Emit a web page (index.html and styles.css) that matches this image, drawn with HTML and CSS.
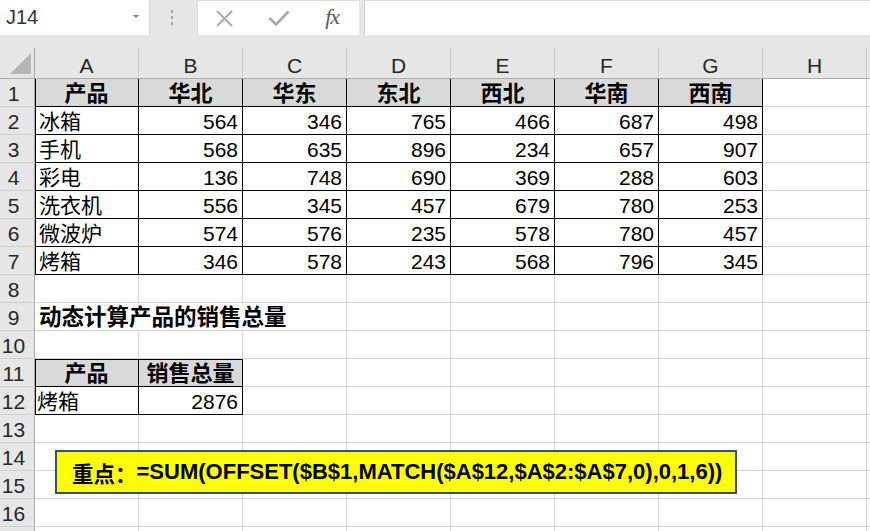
FILE: index.html
```html
<!DOCTYPE html>
<html lang="zh-CN">
<head>
<meta charset="utf-8">
<title>Excel</title>
<link rel="stylesheet" href="styles.css">
</head>
<body>
<div class="app">
  <div class="fbar">
    <div class="namebox"><span class="nb-text">J14</span><span class="caret"></span></div>
    <div class="grip"><i></i><i></i><i></i></div>
    <div class="btns">
      <div class="slot"><svg width="17" height="17" viewBox="0 0 17 17"><path d="M1 1 L16 16 M16 1 L1 16" stroke="#a9a9a9" stroke-width="1.8" fill="none"/></svg></div>
      <div class="slot"><svg width="22" height="16" viewBox="0 0 22 16"><path d="M1.5 8 L8 14.5 L20.5 1.5" stroke="#a9a9a9" stroke-width="2.6" fill="none"/></svg></div>
      <div class="slot fx">fx</div>
    </div>
    <div class="input"></div>
  </div>

  <div class="sheet">
    <div class="corner"><svg width="22" height="22" viewBox="0 0 22 22"><polygon points="21,0 21,21 0,21" fill="#b5b5b5"/></svg></div>
    <div class="ch">A</div><div class="ch">B</div><div class="ch">C</div><div class="ch">D</div><div class="ch">E</div><div class="ch">F</div><div class="ch">G</div><div class="ch">H</div><div class="ch s"></div>

    <div class="rh">1</div>
    <div class="c t tl hd">产品</div><div class="c t hd">华北</div><div class="c t hd">华东</div><div class="c t hd">东北</div><div class="c t hd">西北</div><div class="c t hd">华南</div><div class="c t hd">西南</div><div class="c"></div><div class="c s"></div>

    <div class="rh">2</div>
    <div class="c t tl">冰箱</div><div class="c t n">564</div><div class="c t n">346</div><div class="c t n">765</div><div class="c t n">466</div><div class="c t n">687</div><div class="c t n">498</div><div class="c"></div><div class="c s"></div>

    <div class="rh">3</div>
    <div class="c t tl">手机</div><div class="c t n">568</div><div class="c t n">635</div><div class="c t n">896</div><div class="c t n">234</div><div class="c t n">657</div><div class="c t n">907</div><div class="c"></div><div class="c s"></div>

    <div class="rh">4</div>
    <div class="c t tl">彩电</div><div class="c t n">136</div><div class="c t n">748</div><div class="c t n">690</div><div class="c t n">369</div><div class="c t n">288</div><div class="c t n">603</div><div class="c"></div><div class="c s"></div>

    <div class="rh">5</div>
    <div class="c t tl">洗衣机</div><div class="c t n">556</div><div class="c t n">345</div><div class="c t n">457</div><div class="c t n">679</div><div class="c t n">780</div><div class="c t n">253</div><div class="c"></div><div class="c s"></div>

    <div class="rh">6</div>
    <div class="c t tl">微波炉</div><div class="c t n">574</div><div class="c t n">576</div><div class="c t n">235</div><div class="c t n">578</div><div class="c t n">780</div><div class="c t n">457</div><div class="c"></div><div class="c s"></div>

    <div class="rh">7</div>
    <div class="c t tl">烤箱</div><div class="c t n">346</div><div class="c t n">578</div><div class="c t n">243</div><div class="c t n">568</div><div class="c t n">796</div><div class="c t n">345</div><div class="c"></div><div class="c s"></div>

    <div class="rh">8</div>
    <div class="c"></div><div class="c"></div><div class="c"></div><div class="c"></div><div class="c"></div><div class="c"></div><div class="c"></div><div class="c"></div><div class="c s"></div>

    <div class="rh">9</div>
    <div class="c title span3">动态计算产品的销售总量</div><div class="c"></div><div class="c"></div><div class="c"></div><div class="c"></div><div class="c"></div><div class="c s"></div>

    <div class="rh">10</div>
    <div class="c"></div><div class="c"></div><div class="c"></div><div class="c"></div><div class="c"></div><div class="c"></div><div class="c"></div><div class="c"></div><div class="c s"></div>

    <div class="rh">11</div>
    <div class="c t tl tt hd">产品</div><div class="c t tt hd">销售总量</div><div class="c"></div><div class="c"></div><div class="c"></div><div class="c"></div><div class="c"></div><div class="c"></div><div class="c s"></div>

    <div class="rh">12</div>
    <div class="c t tl first">烤箱</div><div class="c t n">2876</div><div class="c"></div><div class="c"></div><div class="c"></div><div class="c"></div><div class="c"></div><div class="c"></div><div class="c s"></div>

    <div class="rh">13</div>
    <div class="c"></div><div class="c"></div><div class="c"></div><div class="c"></div><div class="c"></div><div class="c"></div><div class="c"></div><div class="c"></div><div class="c s"></div>

    <div class="rh">14</div>
    <div class="c"></div><div class="c"></div><div class="c"></div><div class="c"></div><div class="c"></div><div class="c"></div><div class="c"></div><div class="c"></div><div class="c s"></div>

    <div class="rh">15</div>
    <div class="c"></div><div class="c"></div><div class="c"></div><div class="c"></div><div class="c"></div><div class="c"></div><div class="c"></div><div class="c"></div><div class="c s"></div>

    <div class="rh">16</div>
    <div class="c"></div><div class="c"></div><div class="c"></div><div class="c"></div><div class="c"></div><div class="c"></div><div class="c"></div><div class="c"></div><div class="c s"></div>

    <div class="rh"></div>
    <div class="c"></div><div class="c"></div><div class="c"></div><div class="c"></div><div class="c"></div><div class="c"></div><div class="c"></div><div class="c"></div><div class="c s"></div>
  </div>

  <div class="note"><span class="note-cn">重点：</span><span class="note-f">=SUM(OFFSET($B$1,MATCH($A$12,$A$2:$A$7,0),0,1,6))</span></div>
</div>
</body>
</html>
```

FILE: styles.css
```css
* { box-sizing: border-box; }
body {
  margin: 0;
  font-family: "Liberation Sans", "Noto Sans CJK SC", sans-serif;
  background: #fff;
}
.app {
  width: 870px;
  height: 531px;
  overflow: hidden;
  position: relative;
  background: #fff;
}

/* formula bar */
.fbar {
  height: 48px;
  background: #e6e6e6;
  display: flex;
  align-items: flex-start;
}
.namebox {
  width: 150px;
  height: 35px;
  background: #fff;
  display: flex;
  align-items: center;
  justify-content: space-between;
  padding: 0 10px 0 6px;
  border-right: 1px solid #d6d6d6;
  color: #333;
  font-size: 20px;
}
.nb-text { line-height: 35px; }
.caret {
  width: 0;
  height: 0;
  border-left: 3px solid transparent;
  border-right: 3px solid transparent;
  border-top: 3px solid #7a7a7a;
  margin-top: -2px;
}
.grip {
  width: 47px;
  height: 35px;
  display: flex;
  flex-direction: column;
  align-items: center;
  justify-content: center;
  gap: 3px;
  padding-right: 3px;
}
.grip i {
  display: block;
  width: 2px;
  height: 3px;
  background: #a3a3a3;
}
.btns {
  width: 162px;
  height: 35px;
  background: #fff;
  display: flex;
  border-top: 1px solid #dcdcdc;
  border-left: 1px solid #dcdcdc;
}
.slot {
  width: 54px;
  height: 34px;
  display: flex;
  align-items: center;
  justify-content: center;
}
.fx {
  font-family: "Liberation Serif", serif;
  font-style: italic;
  font-size: 22px;
  color: #595959;
  letter-spacing: -1px;
  padding-bottom: 2px;
}
.input {
  flex: 1;
  height: 35px;
  margin-left: 5px;
  background: #fff;
  border-top: 1px solid #dcdcdc;
  border-left: 1px solid #d0d0d0;
}

/* sheet */
.sheet {
  display: grid;
  grid-template-columns: 35px repeat(8, 104px) 3px;
  grid-template-rows: 31px;
  grid-auto-rows: 28px;
}
.corner {
  background: #e6e6e6;
  border-right: 1px solid #ababab;
  border-bottom: 1px solid #ababab;
  display: flex;
  align-items: flex-end;
  justify-content: flex-end;
  padding: 0 2px 3px 0;
}
.ch {
  background: #e6e6e6;
  border-right: 1px solid #c6c6c6;
  border-bottom: 1px solid #ababab;
  text-align: center;
  font-size: 21px;
  color: #262626;
  padding-top: 5px;
  line-height: 25px;
}
.rh {
  background: #e6e6e6;
  border-right: 1px solid #ababab;
  border-bottom: 1px solid #d0d0d0;
  text-align: center;
  font-size: 21px;
  color: #262626;
  padding: 2px 7px 0 0;
  line-height: 25px;
}
.c {
  border-right: 1px solid #d4d4d4;
  border-bottom: 1px solid #d4d4d4;
  font-size: 21px;
  color: #000;
  padding: 2px 4px 0 4px;
  line-height: 25px;
  white-space: nowrap;
  overflow: hidden;
}
.s { border-right: none; }
.t {
  border-right-color: #000;
  border-bottom-color: #000;
}
.tl { box-shadow: inset 1px 0 0 #000; }
.tt { box-shadow: inset 0 1px 0 #000; }
.tl.tt { box-shadow: inset 1px 0 0 #000, inset 0 1px 0 #000; }
.first { padding-left: 2px; }
.hd {
  background: #d9d9d9;
  text-align: center;
  font-weight: bold;
  font-size: 22px;
}
.n { text-align: right; padding-right: 4px; }
.title {
  font-weight: bold;
  font-size: 22.5px;
  overflow: visible;
}
.span3 { grid-column: span 3; }

/* callout */
.note {
  position: absolute;
  left: 55px;
  top: 450px;
  width: 682px;
  height: 44px;
  background: #ffff00;
  border: 2px solid #2f4f86;
  display: flex;
  align-items: center;
  padding-left: 15px;
  font-weight: bold;
  color: #000;
  white-space: nowrap;
}
.note-cn {
  font-family: "Noto Sans CJK SC", sans-serif;
  font-size: 21.5px;
}
.note-f {
  font-family: "Liberation Sans", sans-serif;
  font-size: 22px;
}
```
